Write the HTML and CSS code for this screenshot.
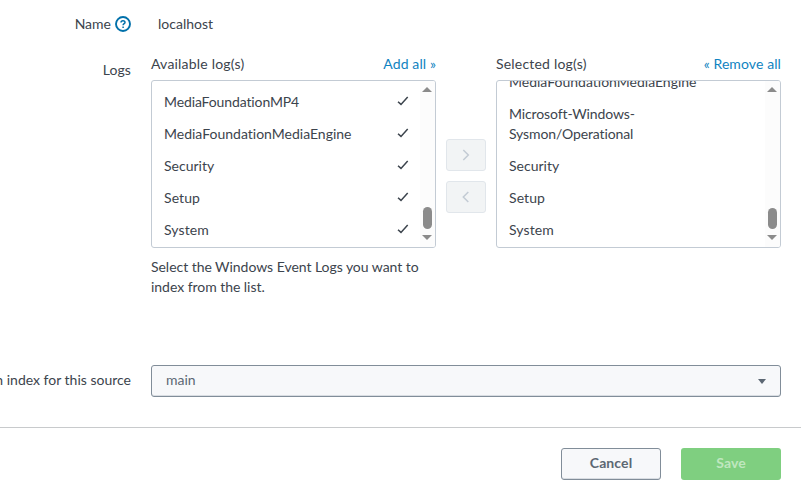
FILE: index.html
```html
<!DOCTYPE html>
<html lang="en">
<head>
<meta charset="utf-8">
<title>Event logs</title>
<link rel="stylesheet" href="styles.css">
</head>
<body>
<form class="form">
  <div class="row name-row">
    <div class="label"><span>Name</span>
      <svg class="help" width="16" height="16" viewBox="0 0 16 16"><circle cx="8" cy="8" r="7" fill="none" stroke="#0070aa" stroke-width="1.9"/><path d="M6 6.6C6 4.2 10 4.1 10 6.4C10 7.7 8.1 7.7 8.1 9.3M8.1 10.6V12" fill="none" stroke="#0070aa" stroke-width="1.5"/></svg>
    </div>
    <div class="value">localhost</div>
  </div>
  <div class="row logs-row">
    <div class="label logs-label"><span class="wide">Logs</span></div>
    <div class="picker">
      <div class="pane">
        <div class="head"><span class="title">Available log(s)</span><a class="wide">Add all »</a></div>
        <div class="list">
          <ul class="items">
            <li><span class="tight">MediaFoundationMP4</span><svg class="check" viewBox="0 0 12 10"><path d="M1 5.7L4 8.4L10.7 1"/></svg></li>
            <li><span>MediaFoundationMediaEngine</span><svg class="check" viewBox="0 0 12 10"><path d="M1 5.7L4 8.4L10.7 1"/></svg></li>
            <li><span>Security</span><svg class="check" viewBox="0 0 12 10"><path d="M1 5.7L4 8.4L10.7 1"/></svg></li>
            <li><span class="wide">Setup</span><svg class="check" viewBox="0 0 12 10"><path d="M1 5.7L4 8.4L10.7 1"/></svg></li>
            <li><span class="wide">System</span><svg class="check" viewBox="0 0 12 10"><path d="M1 5.7L4 8.4L10.7 1"/></svg></li>
          </ul>
          <div class="track"><i class="up"></i><i class="thumb"></i><i class="down"></i></div>
        </div>
        <p class="hint">Select the Windows Event Logs you want to<br>index from the list.</p>
      </div>
      <div class="moves">
        <button type="button" class="move" disabled><svg width="8" height="12" viewBox="0 0 8 12"><path d="M1.3 1L6.3 6L1.3 11"/></svg></button>
        <button type="button" class="move" disabled><svg width="8" height="12" viewBox="0 0 8 12"><path d="M6.3 1L1.3 6L6.3 11"/></svg></button>
      </div>
      <div class="pane">
        <div class="head"><span class="title">Selected log(s)</span><a class="wide">« Remove all</a></div>
        <div class="list">
          <ul class="items">
            <li><span>MediaFoundationMediaEngine</span></li>
            <li><div class="tight">Microsoft-Windows-<br>Sysmon/Operational</div></li>
            <li><span>Security</span></li>
            <li><span class="wide">Setup</span></li>
            <li><span class="wide">System</span></li>
          </ul>
          <div class="track"><i class="up"></i><i class="thumb short"></i><i class="down"></i></div>
        </div>
      </div>
    </div>
  </div>
  <div class="row index-row">
    <div class="label index-label"><span>n index for this source</span></div>
    <div class="select"><span>main</span><i class="caret"></i></div>
  </div>
  <div class="footer">
    <button type="button" class="btn">Cancel</button>
    <button type="button" class="btn save">Save</button>
  </div>
</form>
</body>
</html>
```
FILE: styles.css
```css
* { box-sizing: border-box; }
body { margin: 0; background: #fff; color: #3c444d; font: 14px/20px Lato, "Liberation Sans", sans-serif; font-variant-ligatures: none; overflow: hidden; }
.form { width: 801px; height: 486px; padding-top: 14px; display: flex; flex-direction: column; }
.row { display: flex; gap: 20px; padding-right: 20px; }
.label { width: 131px; flex: none; display: flex; justify-content: flex-end; align-items: center; white-space: nowrap; }
.help { margin-left: 4px; }
.name-row { height: 20px; }
.value { padding-left: 7px; }
.logs-row { margin-top: 20px; height: 244px; }
.logs-label { height: 20px; margin-top: 6px; }
.picker { display: flex; gap: 10px; flex: 1; }
.pane { width: 285px; }
.head { height: 26px; display: flex; justify-content: space-between; }
.title { letter-spacing: 0.2px; }
.wide { letter-spacing: 0.1px; }
.tight { letter-spacing: -0.12px; }
a { color: #0f83c1; }
.list { height: 168px; border: 1px solid #c3cbd4; border-radius: 3px; display: flex; overflow: hidden; }
.items { list-style: none; margin: 0; padding: 0 0 1px; flex: 1; display: flex; flex-direction: column; justify-content: flex-end; }
.items li { padding: 6px 11px 6px 12px; display: flex; flex: none; justify-content: space-between; align-items: center; white-space: nowrap; }
.check { width: 12px; height: 10px; margin-top: -2px; fill: none; stroke: #3c444d; stroke-width: 1.5; }
.track { width: 15px; background: #fcfcfc; display: flex; flex-direction: column; align-items: flex-start; padding: 6px 0 6px 2px; }
.up { border: 5px solid transparent; border-top: 0; border-bottom: 5px solid #8b8b8b; }
.thumb { width: 9px; height: 22px; border-radius: 5px; background: #8b8b8b; margin: auto 0 0 1px; }
.short { height: 21px; }
.down { border: 5px solid transparent; border-bottom: 0; border-top: 5px solid #8b8b8b; margin-top: 6px; }
.track { padding-bottom: 7px; }
.hint { margin: 9px 0 0; white-space: nowrap; letter-spacing: -0.04px; }
.moves { width: 40px; padding-top: 85px; display: flex; flex-direction: column; gap: 10px; }
.move { width: 40px; height: 32px; padding: 0; border: 1px solid #e1e6eb; border-radius: 3px; background: #f2f4f5; display: flex; align-items: center; justify-content: center; }
.move path { fill: none; stroke: #c3cbd4; stroke-width: 1.5; }
.index-row { margin-top: 67px; height: 32px; }
.index-label { padding-bottom: 2px; }
.select { flex: 1; border: 1px solid #818d99; border-radius: 3px; background: #f7f8fa; box-shadow: inset 0 -1px 0 #d9dde2; display: flex; align-items: center; justify-content: space-between; padding: 0 14px 2px 14px; color: #5c6773; }
.caret { border: 4px solid transparent; border-bottom: 0; border-top: 5px solid #5c6773; margin-top: 2px; }
.footer { margin-top: 30px; border-top: 1px solid #c8cacc; padding: 20px 20px 0 0; display: flex; justify-content: flex-end; gap: 20px; }
.btn { width: 100px; height: 32px; border: 1px solid #818d99; border-radius: 3px; background: #f7f8fa; box-shadow: inset 0 -1px 0 #d9dde2; color: #5c6773; font: bold 14px/20px Lato, sans-serif; letter-spacing: 0.1px; padding: 0 0 2px; }
.save { border: 0; background: #7fcf80; color: #bfe7bf; box-shadow: none; }
```
